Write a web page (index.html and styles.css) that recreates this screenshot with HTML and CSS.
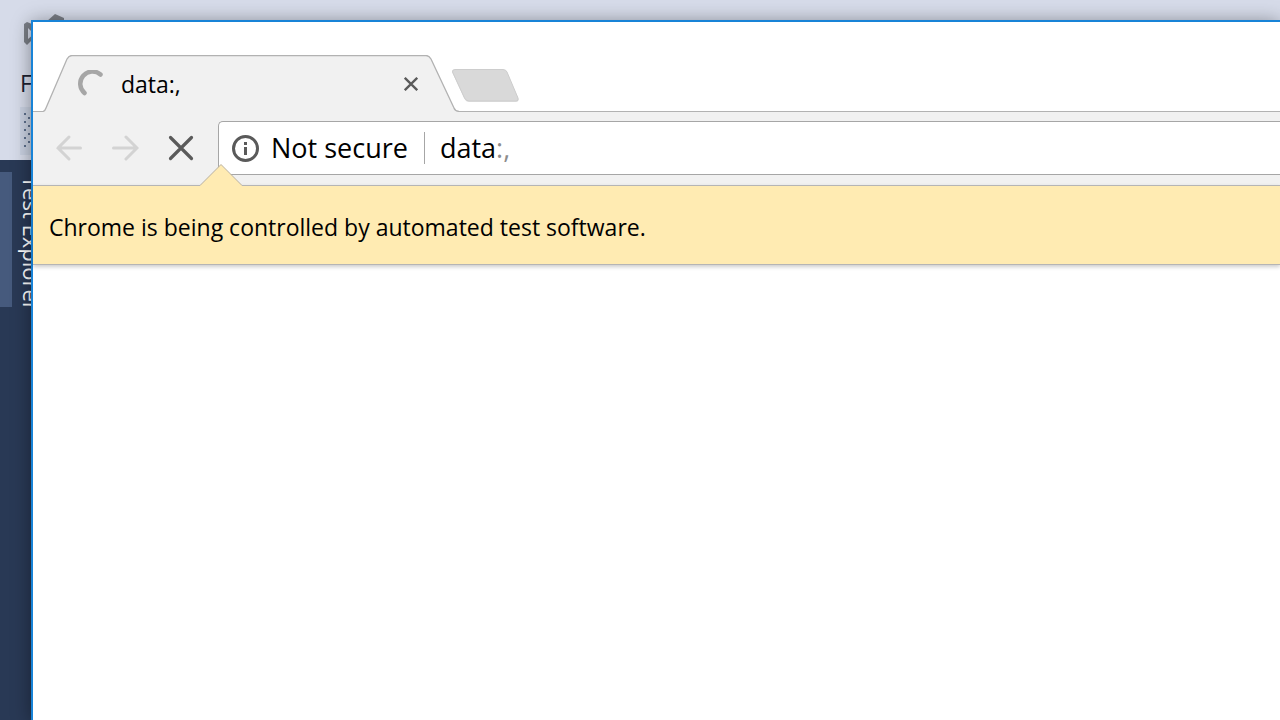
FILE: index.html
```html
<!DOCTYPE html>
<html lang="en">
<head>
<meta charset="utf-8">
<title>data:,</title>
<link rel="stylesheet" href="styles.css">
</head>
<body>
<div class="ide">
  <header class="ide-top">
    <svg class="ide-logo" width="44" height="34" viewBox="0 0 44 34" aria-hidden="true">
      <path d="M0 10l3-2 5 2v16l-5 5-3-3z" fill="#7b7f87"/>
      <path d="M4 14l6 6-6 5z" fill="#d6dbe9"/>
      <path d="M22 8L31 0l9 4v6H22z" fill="#7b7f87"/>
    </svg>
    <span class="ide-menu">File</span>
    <div class="ide-grip">
      <svg width="20" height="40" viewBox="0 0 20 40" fill="#5d6f8c" aria-hidden="true">
        <path d="M4 6h2v2H4zM4 14h2v2H4zM4 22h2v2H4zM4 30h2v2H4zM4 38h2v2H4zM8 10h2v2H8zM8 18h2v2H8zM8 26h2v2H8zM8 34h2v2H8z"/>
      </svg>
    </div>
  </header>
  <aside class="ide-side">
    <div class="side-mark"></div>
    <span class="side-label">Test Explorer</span>
  </aside>
</div>

<main class="browser">
  <div class="tab-strip">
    <div class="tab">
      <svg class="tab-shape" width="416" height="57" viewBox="0 0 416 57" aria-hidden="true">
        <path d="M0 56.5Q2 56 3 53L24 4Q26 .5 29 .5H383Q386 .5 388 4L411 53Q412 56 416 56.5V57H0z" fill="#f1f1f1"/>
        <path d="M0 56.5Q2 56 3 53L24 4Q26 .5 29 .5H383Q386 .5 388 4L411 53Q412 56 416 56.5" fill="none" stroke="#b2b2b2" stroke-width="1.3"/>
      </svg>
      <svg class="spinner" width="28" height="28" viewBox="0 0 28 28" fill="none" stroke="#a6a6a6" stroke-width="4.500" stroke-linecap="round" aria-hidden="true">
        <path d="M23.500 4.500A12 12 0 0 0 7.500 23"/>
      </svg>
      <span class="tab-title">data:,</span>
      <button class="icon-button tab-close" aria-label="Close tab">
        <svg width="14" height="14" viewBox="0 0 14 14" stroke="#5a5a5a" stroke-width="2.300"><path d="M.8.8l12.400 12.400M13.200.8L.8 13.200"/></svg>
      </button>
    </div>
    <button class="icon-button new-tab" aria-label="New tab">
      <svg width="70" height="36" viewBox="0 0 70 36">
        <path d="M5 2.500H53Q56 2.500 57 5L68.500 31Q69 34 66 34H19Q16 34 14.500 31L2.500 5Q2 2.500 5 2.500z" fill="#000" opacity=".12"/>
        <path d="M5 1.500H53Q56 1.500 57 4L68 30Q69 33 66 33H19Q16 33 14.500 30L2.500 4Q2 1.500 5 1.500z" fill="#d9d9d9" stroke="#cdcdcd"/>
      </svg>
    </button>
  </div>

  <div class="toolbar">
    <button class="icon-button nav" aria-label="Back" disabled>
      <svg width="28" height="28" viewBox="0 0 28 28" fill="none" stroke="#d3d3d3" stroke-width="3" stroke-linecap="round"><path d="M25.500 14H3M14 3L3 14l11 11"/></svg>
    </button>
    <button class="icon-button nav" aria-label="Forward" disabled>
      <svg width="28" height="28" viewBox="0 0 28 28" fill="none" stroke="#d3d3d3" stroke-width="3" stroke-linecap="round"><path d="M2.500 14h23M15 3l11 11-11 11"/></svg>
    </button>
    <button class="icon-button nav" aria-label="Stop loading">
      <svg width="28" height="28" viewBox="0 0 28 28" fill="none" stroke="#5a5a5a" stroke-width="3.200" stroke-linecap="round"><path d="M3.500 3.500l21 21M24.500 3.500l-21 21"/></svg>
    </button>
    <div class="omnibox">
      <svg width="28" height="28" viewBox="0 0 28 28" aria-hidden="true">
        <circle cx="14.500" cy="14.500" r="12" fill="none" stroke="#5a5a5a" stroke-width="3"/>
        <path d="M13 8h3v3h-3zM13 13h3v8h-3z" fill="#5a5a5a"/>
      </svg>
      <span class="security">Not secure</span>
      <span class="divider"></span>
      <span class="url">data<span class="url-rest">:,</span></span>
    </div>
  </div>

  <div class="infobar">
    <svg class="infobar-arrow" width="42" height="22" viewBox="0 0 42 22" aria-hidden="true">
      <path d="M0 22L0 21.500 21 .5 42 21.500V22z" fill="#ffebb2"/>
      <path d="M0 21.500L21 .5 42 21.500" fill="none" stroke="#b8b0a0"/>
    </svg>
    <span>Chrome is being controlled by automated test software.</span>
  </div>
</main>
</body>
</html>
```
FILE: styles.css
```css
* {
  box-sizing: border-box;
}

body {
  margin: 0;
  height: 100vh;
  overflow: hidden;
  position: relative;
  font-family: "Open Sans", "Noto Sans", sans-serif;
  color: #000;
}

.ide {
  height: 100%;
  display: flex;
  flex-direction: column;
  background: #293955;
}

.ide-top {
  height: 160px;
  flex: none;
  display: flex;
  flex-direction: column;
  align-items: flex-start;
  padding: 14px 0 0 20px;
  background: #d6dbe9;
}

.ide-logo {
  margin-left: 4px;
}

.ide-menu {
  margin-top: 19px;
  font-size: 23px;
  line-height: 32px;
  color: #1b2030;
}

.ide-grip {
  margin-top: 8px;
  width: 80px;
  height: 48px;
  background: #c9d1e1;
}

.ide-side {
  flex: 1;
  display: flex;
  align-items: flex-start;
  padding-top: 12px;
}

.side-mark {
  width: 12px;
  height: 135px;
  background: #465a7d;
}

.side-label {
  margin: 4px 0 0 6px;
  writing-mode: vertical-rl;
  font-size: 22px;
  line-height: 28px;
  color: #fff;
}

.browser {
  position: absolute;
  inset: 20px 0 0 31px;
  border-top: 2px solid #1883d7;
  border-left: 2px solid #1883d7;
  background: #fff;
  box-shadow: 0 2px 18px rgba(0, 0, 0, 0.4);
}

.icon-button {
  flex: none;
  display: flex;
  align-items: center;
  justify-content: center;
  padding: 0;
  border: 0;
  background: none;
}

.tab-strip {
  height: 90px;
  display: flex;
  align-items: flex-end;
  border-bottom: 1px solid #b2b2b2;
}

.tab {
  position: relative;
  width: 416px;
  height: 57px;
  margin: 0 0 -1px 10px;
  display: flex;
  align-items: center;
  padding: 0 41px 0 34px;
}

.tab-shape {
  position: absolute;
  inset: 0;
}

.spinner,
.tab-title,
.tab-close {
  position: relative;
}

.tab-title {
  flex: 1;
  margin-left: 16px;
  font-size: 23px;
  line-height: 32px;
}

.new-tab {
  margin: 0 0 7px -9px;
}

.toolbar {
  height: 73px;
  display: flex;
  align-items: center;
  padding: 0 0 2px 8px;
  background: #f1f1f1;
}

.nav {
  width: 56px;
  height: 56px;
}

.omnibox {
  flex: 1;
  height: 54px;
  margin-left: 9px;
  display: flex;
  align-items: center;
  padding-left: 12px;
  border: 1px solid #a6a6a6;
  border-right: 0;
  border-radius: 5px 0 0 5px;
  background: #fff;
  font-size: 27px;
  line-height: 36px;
}

.security {
  margin-left: 12px;
}

.divider {
  width: 1px;
  height: 32px;
  margin: 0 15px 0 16px;
  background: #a6a6a6;
}

.url-rest {
  color: #8c8c8c;
}

.infobar {
  position: relative;
  display: flex;
  padding: 25px 16px 21px;
  border-top: 1px solid #b5b5b5;
  border-bottom: 1px solid #b5b5b5;
  background: #ffebb2;
  box-shadow: 0 2px 4px rgba(0, 0, 0, 0.2);
  font-size: 23px;
  line-height: 32px;
}

.infobar-arrow {
  position: absolute;
  left: 167px;
  top: -22px;
}
```
